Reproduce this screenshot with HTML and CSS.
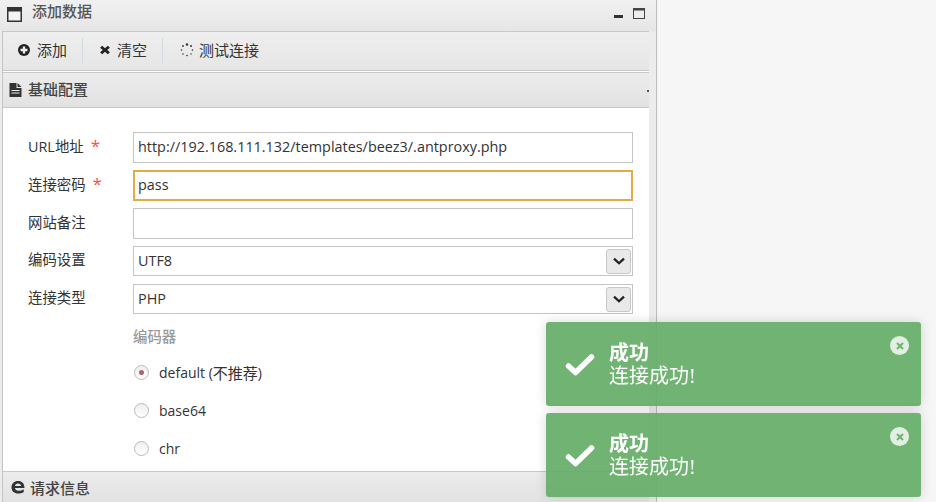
FILE: index.html
```html
<!DOCTYPE html>
<html lang="zh">
<head>
<meta charset="utf-8">
<title>添加数据</title>
<link rel="stylesheet" href="styles.css">
</head>
<body>
<div class="page">
  <main class="panel">
    <header class="titlebar">
      <svg class="win-icon" viewBox="0 0 15 15"><path d="M0 0h15v15H0z" fill="#333"/><path d="M1.500 4.500h12v9h-12z" fill="#f3f3f3"/></svg>
      <span class="title">添加数据</span>
      <span class="win-controls">
        <svg class="win-min" viewBox="0 0 9 3"><path d="M0 0h9v3H0z" fill="#333"/></svg>
        <svg class="win-max" viewBox="0 0 12 11"><path d="M0 0h12v11H0z" fill="#444"/><path d="M1 2.500h10V10H1z" fill="#eee"/></svg>
      </span>
    </header>
    <div class="body-wrap">
      <div class="inner">
        <nav class="toolbar">
          <button class="tool tool-add">
            <svg class="tool-icon" viewBox="0 0 12 12"><circle cx="6" cy="6" r="6" fill="#222"/><path d="M4.800 2.500h2.400v2.300h2.300v2.400H7.200v2.300H4.800V7.200H2.500V4.800h2.300z" fill="#eee"/></svg>添加
          </button>
          <span class="sep"></span>
          <button class="tool tool-clear">
            <svg class="tool-icon" viewBox="0 0 10 10"><path d="M2.200 .8 5 3.200 7.800 .8 9.900 2.800 7.200 5 9.900 7.200 7.800 9.200 5 6.800 2.200 9.200 .1 7.200 2.800 5 .1 2.800z" fill="#222"/></svg>清空
          </button>
          <span class="sep"></span>
          <button class="tool tool-test">
            <svg class="tool-icon spin" viewBox="0 0 14 14"><g fill="#333"><circle cx="7" cy="1.500" r="1.200"/><circle cx="11" cy="3" r="1"/><circle cx="12.500" cy="7" r=".8"/><circle cx="11" cy="11" r=".7"/><circle cx="7" cy="12.500" r=".8"/><circle cx="3" cy="11" r=".8"/><circle cx="1.500" cy="7" r=".8"/><circle cx="3" cy="3" r=".9"/></g></svg>测试连接
          </button>
        </nav>
        <section class="acc-head acc-basic">
          <svg class="file-icon" viewBox="0 0 12 14"><path d="M0 0h7v5h5v9H0z" fill="#333"/><path d="M8 0l4 4H8z" fill="#333"/><path d="M2 7h8v1H2zM2 9.500h8v1H2z" fill="#eee"/></svg>
          <span>基础配置</span>
          <span class="acc-dot"></span>
        </section>
        <form class="form">
          <div class="row"><label class="lbl">URL地址<em>*</em></label><input class="field" value="http://192.168.111.132/templates/beez3/.antproxy.php"></div>
          <div class="row"><label class="lbl">连接密码<em>*</em></label><input class="field focus" value="pass"></div>
          <div class="row"><label class="lbl">网站备注</label><input class="field" value=""></div>
          <div class="row row-sel"><label class="lbl">编码设置</label><div class="field select"><span>UTF8</span><span class="caret"><svg viewBox="0 0 12 8"><path d="M1.800.8 6 4.800 10.200.8 11.800 2.400 6 7.700.2 2.400z" fill="#222"/></svg></span></div></div>
          <div class="row row-sel"><label class="lbl">连接类型</label><div class="field select"><span>PHP</span><span class="caret"><svg viewBox="0 0 12 8"><path d="M1.800.8 6 4.800 10.200.8 11.800 2.400 6 7.700.2 2.400z" fill="#222"/></svg></span></div></div>
          <div class="encoders">
            <div class="enc-title">编码器</div>
            <div class="radio"><span class="dot on"></span>default (<span class="cjk">不推荐</span>)</div>
            <div class="radio"><span class="dot"></span>base64</div>
            <div class="radio"><span class="dot"></span>chr</div>
          </div>
        </form>
        <section class="acc-head acc-req">
          <svg class="edge-icon" viewBox="0 0 14 14"><path d="M.5 7.500C.5 3.500 3.300 1 7 1c3.900 0 6.500 2.600 6.500 7H4c.2 1.700 1.500 2.700 3.500 2.700 1.800 0 3.400-.5 5.200-1.500v3C11 13.100 9.200 13.500 7.200 13.500 3.300 13.500.5 11.300.5 7.500zM4 6h6c-.1-1.500-1.200-2.400-3-2.400S4.200 4.500 4 6z" fill="#333"/></svg>
          <span>请求信息</span>
        </section>
      </div>
    </div>
  </main>
  <aside class="side"></aside>
</div>
<div class="toasts">
  <div class="toast">
    <svg class="check" viewBox="0 0 30 23"><path d="M3.500 13l7 6.500L26.500 4" fill="none" stroke="#fff" stroke-width="5.500" stroke-linecap="round" stroke-linejoin="round"/></svg>
    <div class="toast-text"><b>成功</b><span>连接成功!</span></div>
    <span class="close"><svg viewBox="0 0 8 8"><path d="M1 1l6 6M7 1 1 7" stroke="#70b271" stroke-width="2" fill="none"/></svg></span>
  </div>
  <div class="toast">
    <svg class="check" viewBox="0 0 30 23"><path d="M3.500 13l7 6.500L26.500 4" fill="none" stroke="#fff" stroke-width="5.500" stroke-linecap="round" stroke-linejoin="round"/></svg>
    <div class="toast-text"><b>成功</b><span>连接成功!</span></div>
    <span class="close"><svg viewBox="0 0 8 8"><path d="M1 1l6 6M7 1 1 7" stroke="#70b271" stroke-width="2" fill="none"/></svg></span>
  </div>
</div>
</body>
</html>
```
FILE: styles.css
```css
* { box-sizing: border-box; }
html, body { margin: 0; height: 100%; overflow: hidden; }
body { font-family: "Open Sans", "Noto Sans CJK SC", sans-serif; font-size: 14px; color: #333; background: #f5f5f5; }
.page { display: flex; height: 502px; width: 936px; }
.panel { width: 657px; height: 502px; border-right: 1px solid #bdbdbd; background: #ececec; display: flex; flex-direction: column; overflow: hidden; }
.side { flex: 1; background: #f6f6f6; }
.titlebar { height: 31px; flex: none; display: flex; align-items: center; padding: 0 11px 7px 7px; background: linear-gradient(#f0f0f0, #e6e6e6); }
.win-icon { width: 15px; height: 15px; margin-top: 4px; }
.title { margin-left: 10px; margin-bottom: 4px; font-size: 15px; font-weight: 500; color: #555; }
.win-controls { margin-left: auto; display: flex; align-items: center; gap: 10px; }
.win-min { width: 9px; height: 3px; margin-top: 8px; }
.win-max { width: 12px; height: 11px; margin-top: 2px; }
.body-wrap { flex: 1; min-height: 0; padding-left: 2px; padding-right: 7px; }
.inner { height: 100%; display: flex; flex-direction: column; background: #fff; border-left: 1px solid #c4c4c4; }
.toolbar { height: 40px; flex: none; display: flex; align-items: center; padding: 0 0 4px 10px; background: linear-gradient(#eee, #e6e6e6); border-top: 1px solid #c8c8c8; border-bottom: 1px solid #c8c8c8; }
.tool { display: flex; align-items: center; border: 0; background: none; padding: 0; font: inherit; font-size: 15px; color: #333; }
.tool-icon { flex: none; margin-top: 2px; }
.tool-add { margin-left: 5px; }
.tool-add .tool-icon { width: 12px; height: 12px; margin-right: 7px; }
.tool-clear { margin-left: 1px; }
.tool-clear .tool-icon { width: 10px; height: 10px; margin-right: 7px; }
.tool-test { margin-left: 1px; }
.tool-test .tool-icon { width: 14px; height: 14px; margin-right: 5px; }
.sep { width: 1px; height: 25px; background: #cfdde2; margin: 2px 16px 0 15px; }
.acc-head { flex: none; display: flex; align-items: center; background: linear-gradient(#ececec, #e2e2e2); font-size: 15px; font-weight: 500; color: #444; }
.acc-basic { height: 36px; margin-top: 1px; padding: 0 0 4px 6px; border-top: 1px solid #c8c8c8; border-bottom: 1px solid #c8c8c8; gap: 6px; position: relative; }
.file-icon { width: 13px; height: 14px; margin-top: 3px; }
.acc-dot { position: absolute; right: 0; top: 17px; width: 2px; height: 2px; background: #555; }
.form { flex: 1; min-height: 0; padding: 24px 16px 0 25px; overflow: hidden; }
.row { display: flex; align-items: center; height: 31px; margin-bottom: 7px; }
.row-sel { height: 30px; margin-bottom: 8px; }
.lbl { width: 105px; flex: none; font-size: 14.400px; padding-bottom: 5px; color: #333; }
.lbl em { font-style: normal; font-size: 17px; color: #ff4d4d; margin-left: 7px; }
.field { flex: 1; height: 100%; min-width: 0; border: 1px solid #c4c4c4; padding: 0 4px 2px; font: inherit; font-size: 14.400px; color: #333; background: #fff; outline: 0; }
.field.focus { border: 2px solid #e3ab45; padding: 0 3px 2px; }
.select { display: flex; align-items: center; justify-content: space-between; padding: 0 1px 0 4px; }
.select > span:first-child { padding-bottom: 2px; }
.caret { width: 25px; height: 25px; border: 1px solid #c8c8c8; border-radius: 3px; background: #e9e9e9; display: flex; align-items: center; justify-content: center; }
.caret svg { width: 12px; height: 8px; }
.encoders { padding-left: 105px; }
.enc-title { color: #999; font-size: 14.400px; font-weight: 500; height: 20px; margin: 13px 0 6px; line-height: 20px; }
.radio { display: flex; align-items: center; height: 38px; color: #333; }
.cjk { font-size: 15px; }
.dot { width: 15px; height: 15px; border-radius: 50%; border: 1px solid #bbb; background: linear-gradient(#eee, #fff); margin: 0 10px 0 1px; display: flex; align-items: center; justify-content: center; }
.dot.on::after { content: ""; width: 5px; height: 5px; border-radius: 50%; background: #a8656d; }
.acc-req { height: 31px; padding-left: 8px; gap: 5px; border-top: 1px solid #c8c8c8; }
.edge-icon { width: 14px; height: 14px; }
.toasts { position: fixed; left: 546px; top: 322px; width: 375px; display: flex; flex-direction: column; gap: 7px; }
.toast { height: 84px; background: rgba(100, 172, 102, .92); border-radius: 3px; box-shadow: 0 0 12px rgba(0,0,0,.15); color: #fff; position: relative; display: flex; padding-left: 19px; }
.check { width: 30px; height: 23px; margin-top: 31px; flex: none; }
.toast-text { margin-left: 14px; padding-top: 20px; font-family: "Liberation Serif", "Noto Sans CJK SC", serif; font-size: 20px; line-height: 23px; display: flex; flex-direction: column; }
.toast-text b { font-weight: 700; }
.close { position: absolute; right: 12px; top: 14px; width: 19px; height: 19px; border-radius: 50%; background: rgba(255,255,255,.8); display: flex; align-items: center; justify-content: center; }
.close svg { width: 8px; height: 8px; }
```
